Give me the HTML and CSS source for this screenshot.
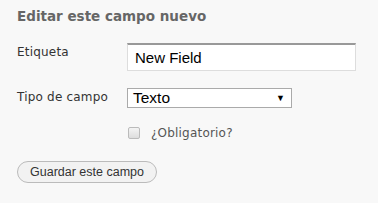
FILE: index.html
```html
<!DOCTYPE html>
<html lang="es">
<head>
    <meta charset="UTF-8">
    <title>Editar este campo nuevo</title>
    <link rel="stylesheet" href="styles.css">
</head>
<body>
    <div class="panel">
        <h3 class="panel-title">Editar este campo nuevo</h3>

        <div class="form-grid">
            <label class="field-label" for="label">Etiqueta</label>
            <input class="text-input" id="label" type="text" value="New Field">

            <label class="field-label" for="type">Tipo de campo</label>
            <div class="select-box" id="type">
                <span>Texto</span>
                <span class="arrow">&#9660;</span>
            </div>

            <div></div>
            <label class="check-row">
                <span class="check"></span>
                <span>¿Obligatorio?</span>
            </label>
        </div>

        <button class="save-button">Guardar este campo</button>
    </div>
</body>
</html>
```

FILE: styles.css
```css
* {
    margin: 0;
    padding: 0;
    box-sizing: border-box;
}

body {
    background: #f8f8f8;
    font-family: 'DejaVu Sans', Verdana, sans-serif;
}

.panel {
    padding: 8px 17px;
}

.panel-title {
    font-size: 13.5px;
    font-weight: bold;
    color: #666;
    line-height: 16px;
    margin-bottom: 19px;
}

/* etiqueta / campo */
.form-grid {
    display: grid;
    grid-template-columns: 110px 229px;
    row-gap: 17px;
    align-items: center;
}

.field-label {
    font-size: 12px;
    letter-spacing: 0.2px;
    color: #333;
    align-self: start;
    padding-top: 2px;
}

.text-input {
    height: 28px;
    width: 229px;
    border: 1px solid #ddd;
    border-top: 2px solid #999;
    background: #fff;
    font-family: 'Liberation Sans', Arial, sans-serif;
    font-size: 15px;
    color: #000;
    padding: 0 7px;
    outline: none;
}

.select-box {
    width: 165px;
    height: 20px;
    border: 1px solid #aaa;
    background: #fff;
    display: flex;
    align-items: center;
    justify-content: space-between;
    padding: 0 6px 0 5px;
    font-family: 'Liberation Sans', Arial, sans-serif;
    font-size: 15.5px;
    color: #000;
}

.arrow {
    font-size: 9px;
}

.check-row {
    display: flex;
    align-items: center;
    gap: 11px;
    font-size: 12px;
    letter-spacing: 0.2px;
    color: #555;
    margin-top: 1px;
}

.check {
    width: 12px;
    height: 12px;
    border: 1px solid #bbb;
    border-radius: 2px;
    background: linear-gradient(#f4f4f4, #ddd);
    margin-left: 1px;
}

.save-button {
    margin-top: 21px;
    width: 140px;
    height: 22px;
    border: 1px solid #bbb;
    border-radius: 11px;
    background: #f2f2f2;
    font-family: 'Liberation Sans', Arial, sans-serif;
    font-size: 12.5px;
    color: #333;
}
```
